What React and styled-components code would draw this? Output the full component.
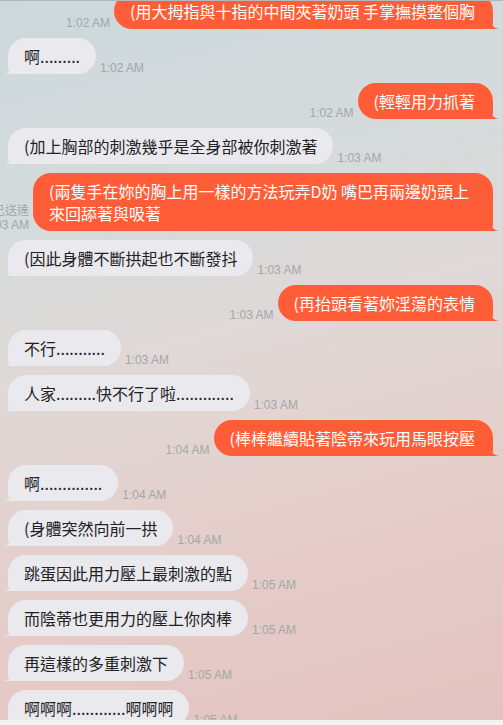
import styled, { createGlobalStyle, css } from "styled-components";

const messages = [
  { id: 1, mine: true, text: "(用大拇指與十指的中間夾著奶頭 手掌撫摸整個胸", time: "1:02 AM" },
  { id: 2, mine: false, text: "啊.........", time: "1:02 AM" },
  { id: 3, mine: true, text: "(輕輕用力抓著", time: "1:02 AM" },
  { id: 4, mine: false, text: "(加上胸部的刺激幾乎是全身部被你刺激著", time: "1:03 AM" },
  {
    id: 5,
    mine: true,
    text: "(兩隻手在妳的胸上用一樣的方法玩弄D奶 嘴巴再兩邊奶頭上來回舔著與吸著",
    time: "1:03 AM",
    read: "已送達",
  },
  { id: 6, mine: false, text: "(因此身體不斷拱起也不斷發抖", time: "1:03 AM" },
  { id: 7, mine: true, text: "(再抬頭看著妳淫蕩的表情", time: "1:03 AM" },
  { id: 8, mine: false, text: "不行...........", time: "1:03 AM" },
  { id: 9, mine: false, text: "人家.........快不行了啦.............", time: "1:03 AM" },
  { id: 10, mine: true, text: "(棒棒繼續貼著陰蒂來玩用馬眼按壓", time: "1:04 AM" },
  { id: 11, mine: false, text: "啊..............", time: "1:04 AM" },
  { id: 12, mine: false, text: "(身體突然向前一拱", time: "1:04 AM" },
  { id: 13, mine: false, text: "跳蛋因此用力壓上最刺激的點", time: "1:05 AM" },
  { id: 14, mine: false, text: "而陰蒂也更用力的壓上你肉棒", time: "1:05 AM" },
  { id: 15, mine: false, text: "再這樣的多重刺激下", time: "1:05 AM" },
  { id: 16, mine: false, text: "啊啊啊............啊啊啊", time: "1:05 AM" },
];

function App() {
  return (
    <>
      <GlobalStyle />
      <StyledScreen>
        <StyledThread>
          {messages.map((msg) => {
            return (
              <StyledRow key={msg.id} $mine={msg.mine}>
                <StyledBubble $mine={msg.mine}>{msg.text}</StyledBubble>
                <StyledMeta $mine={msg.mine}>
                  {msg.read && <span>{msg.read}</span>}
                  <span>{msg.time}</span>
                </StyledMeta>
              </StyledRow>
            );
          })}
        </StyledThread>
        <StyledInputEdge />
      </StyledScreen>
    </>
  );
}

const GlobalStyle = createGlobalStyle`
  * {
    box-sizing: border-box;
  }
  body {
    margin: 0;
    font-family: "Noto Sans CJK TC", "Noto Sans CJK SC", "Liberation Sans", sans-serif;
  }
`;

const StyledScreen = styled.div`
  width: 503px;
  height: 725px;
  overflow: hidden;
  display: flex;
  flex-direction: column;
  border-top: 1px solid #b3b8ba;
  background: linear-gradient(
    165deg,
    #ccd8dc 0%,
    #d6dbdc 28%,
    #e0d8d6 48%,
    #e5cdc9 72%,
    #e2c2c0 100%
  );
`;

const StyledThread = styled.div`
  flex: 1;
  min-height: 0;
  display: flex;
  flex-direction: column;
  gap: 9px;
  padding: 0 10px 0 8px;
  margin-top: -8px;
  overflow: hidden;
`;

const StyledInputEdge = styled.div`
  height: 5px;
  flex-shrink: 0;
  background-color: #f5f2f2;
`;

const StyledRow = styled.div`
  display: flex;
  align-items: flex-end;
  gap: 4px;
  flex-shrink: 0;
  flex-direction: ${(p) => (p.$mine ? "row-reverse" : "row")};
  justify-content: flex-start;
`;

const StyledBubble = styled.div`
  position: relative;
  flex-shrink: 0;
  max-width: 460px;
  padding: 7px 16px;
  font-size: 16px;
  line-height: 22px;
  border-radius: 18px;
  white-space: pre-wrap;
  &::after {
    content: "";
    position: absolute;
    bottom: 0;
    width: 10px;
    height: 12px;
  }
  ${(p) =>
    p.$mine
      ? css`
          background-color: #fe5d37;
          color: #ffffff;
          padding-right: 18px;
          border-bottom-right-radius: 6px;
          &::after {
            right: -6px;
            background-color: #fe5d37;
            clip-path: path("M0 0 C1 7 4 11 10 12 L0 12 Z");
          }
        `
      : css`
          background-color: #e9e9ee;
          color: #222222;
          border-bottom-left-radius: 6px;
          &::after {
            left: -4px;
            background-color: #e9e9ee;
            clip-path: path("M10 0 C9 7 6 11 0 12 L10 12 Z");
          }
        `}
`;

const StyledMeta = styled.div`
  flex-shrink: 0;
  display: flex;
  flex-direction: column;
  align-items: ${(p) => (p.$mine ? "flex-end" : "flex-start")};
  margin-bottom: -1px;
  font-family: "Liberation Sans", "Noto Sans CJK TC", sans-serif;
  font-size: 12px;
  line-height: 14px;
  color: #a3a7a9;
  white-space: nowrap;
`;

export default App;
